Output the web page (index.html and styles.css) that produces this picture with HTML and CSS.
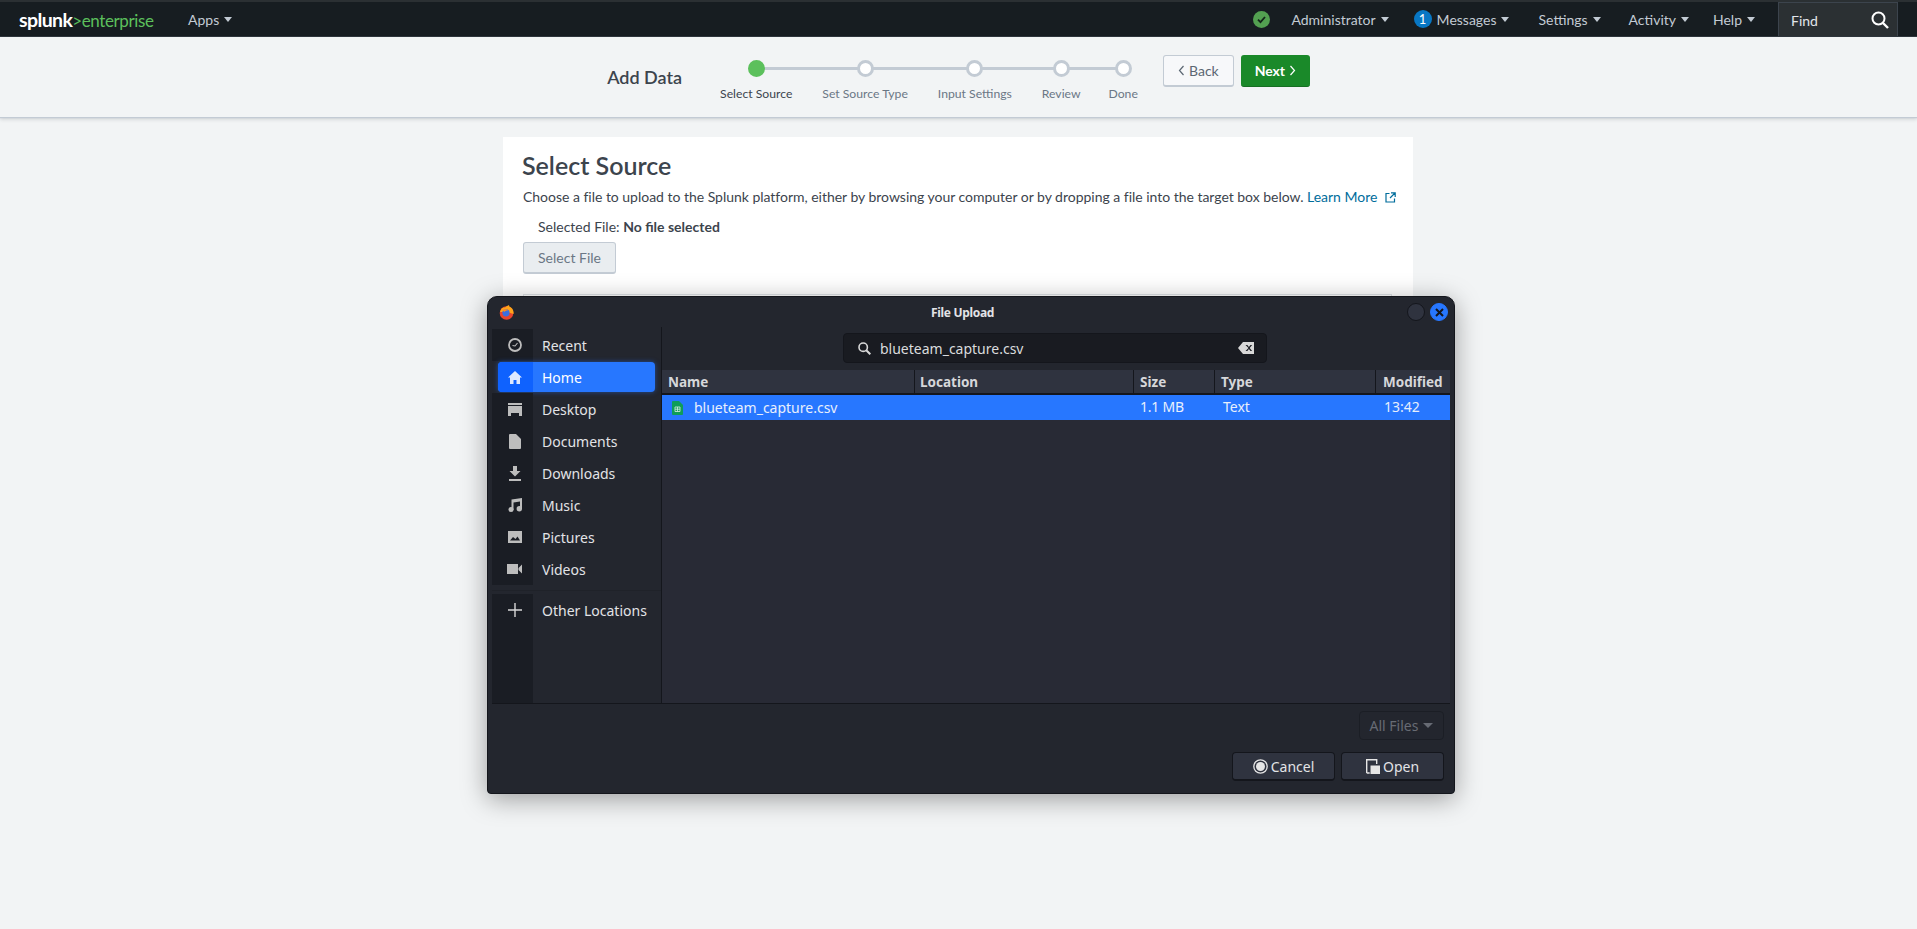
FILE: index.html
```html
<!DOCTYPE html>
<html lang="en">
<head>
  <meta charset="UTF-8" />
  <title>Add Data | Splunk</title>
  <link rel="stylesheet" href="styles.css">
</head>
<body>
  <nav class="navbar">
    <div class="logo"><span class="logo-splunk">splunk</span><span class="logo-green">&gt;enterprise</span></div>
    <a class="nav-item apps">Apps<i class="caret"></i></a>
    <div class="nav-right">
      <svg class="health" width="17" height="17" viewBox="0 0 17 17"><circle cx="8.5" cy="8.5" r="8.5" fill="#53a051"/><path d="M5 8.7l2.5 2.5L12 6" fill="none" stroke="#14261a" stroke-width="1.8"/></svg>
      <a class="nav-item admin">Administrator<i class="caret"></i></a>
      <a class="nav-item messages"><span class="badge">1</span>Messages<i class="caret"></i></a>
      <a class="nav-item settings">Settings<i class="caret"></i></a>
      <a class="nav-item activity">Activity<i class="caret"></i></a>
      <a class="nav-item help">Help<i class="caret"></i></a>
      <div class="find">
        <span>Find</span>
        <svg width="18" height="18" viewBox="0 0 18 18"><circle cx="7.5" cy="7.5" r="6" fill="none" stroke="#fff" stroke-width="2"/><path d="M12 12l5 5" stroke="#fff" stroke-width="2.4"/></svg>
      </div>
    </div>
  </nav>

  <header class="wizard">
    <h2 class="wizard-title">Add Data</h2>
    <ol class="steps">
      <li class="step active"><span class="dot"></span>Select Source</li>
      <li class="step"><span class="dot"></span>Set Source Type</li>
      <li class="step"><span class="dot"></span>Input Settings</li>
      <li class="step"><span class="dot"></span>Review</li>
      <li class="step"><span class="dot"></span>Done</li>
    </ol>
    <button class="btn btn-back"><svg width="7" height="11" viewBox="0 0 7 11"><path d="M5.5 1L1.5 5.5l4 4.5" fill="none" stroke="#5c6773" stroke-width="1.2"/></svg>Back</button>
    <button class="btn btn-next">Next<svg width="7" height="11" viewBox="0 0 7 11"><path d="M1.5 1l4 4.5-4 4.5" fill="none" stroke="#fff" stroke-width="1.2"/></svg></button>
  </header>

  <main class="panel">
    <h1>Select Source</h1>
    <p class="desc">Choose a file to upload to the Splunk platform, either by browsing your computer or by dropping a file into the target box below. <a class="learn">Learn More <svg width="11" height="11" viewBox="0 0 11 11"><path d="M4.5 1.5H1v8.500h8.500V6.500M6 .8h4.200V5M10 1L5 6" fill="none" stroke="#006d9c" stroke-width="1.200"/></svg></a></p>
    <p class="selected">Selected File: <b>No file selected</b></p>
    <button class="btn btn-select">Select File</button>
    <div class="dropzone"></div>
  </main>

  <div class="dialog">
    <div class="titlebar">
      <svg class="ff" width="15" height="15" viewBox="0 0 15 15">
        <circle cx="7.500" cy="8" r="6.800" fill="#e8452c"/>
        <path d="M1 7C2 3 4 2 6 2.500 7 1.500 9 .5 10 0c0 1.500 1 2 2 2.500 2 1.500 3 4 2.500 6.500L8 7z" fill="#ffa31a"/>
        <circle cx="7" cy="7.800" r="3.600" fill="#3a6fe0"/>
        <path d="M3 5c2-1 5-1 6 .5-2 0-3 .5-3.500 1.500z" fill="#ff8a1f"/>
      </svg>
      <span class="dialog-title">File Upload</span>
      <span class="win-btn"></span>
      <span class="win-btn close"><svg width="9" height="9" viewBox="0 0 9 9"><path d="M1 1l7 7M8 1L1 8" stroke="#14161c" stroke-width="2"/></svg></span>
    </div>

    <div class="dialog-main">
      <aside class="places">
        <div class="place"><span class="place-icon"><svg width="14" height="14" viewBox="0 0 14 14"><circle cx="7" cy="7" r="6" fill="none" stroke="#bdbdbd" stroke-width="1.800"/><path d="M4.500 7.500L7 8l2.500-3" fill="none" stroke="#bdbdbd" stroke-width="1.100"/></svg></span>Recent</div>
        <div class="place active"><span class="place-icon"><svg width="14" height="13" viewBox="0 0 14 13"><path d="M7 0L0 6.500h2V13h3.500V9h3v4H12V6.500h2z" fill="#dfe9ff"/></svg></span>Home</div>
        <div class="place"><span class="place-icon"><svg width="14" height="13" viewBox="0 0 14 13"><path d="M0 0h14v2H0zM0 3h14v10h-3v-3H3v3H0z" fill="#bdbdbd"/></svg></span>Desktop</div>
        <div class="place"><span class="place-icon"><svg width="12" height="15" viewBox="0 0 12 15"><path d="M0 1a1 1 0 0 1 1-1h6l5 5v9a1 1 0 0 1-1 1H1a1 1 0 0 1-1-1z" fill="#bdbdbd"/></svg></span>Documents</div>
        <div class="place"><span class="place-icon"><svg width="12" height="15" viewBox="0 0 12 15"><path d="M4 0h4v5h3.500L6 10.500.5 5H4zM0 13h12v2H0z" fill="#bdbdbd"/></svg></span>Downloads</div>
        <div class="place"><span class="place-icon"><svg width="14" height="14" viewBox="0 0 14 14"><path d="M3.500 1.500L14 0v11h-2V3.500L5.500 4.500V12h-2z" fill="#bdbdbd"/><circle cx="3" cy="11.500" r="2.500" fill="#bdbdbd"/><circle cx="11.300" cy="10.800" r="2.700" fill="#bdbdbd"/></svg></span>Music</div>
        <div class="place"><span class="place-icon"><svg width="14" height="12" viewBox="0 0 14 12"><path fill-rule="evenodd" d="M0 0h14v12H0zM2 9.500h10L9.500 5.500 7.500 8 5 6z" fill="#bdbdbd"/></svg></span>Pictures</div>
        <div class="place"><span class="place-icon"><svg width="15" height="10" viewBox="0 0 15 10"><path d="M0 0h11v10H0zM11.500 4L15 .5v9L11.500 6z" fill="#bdbdbd"/></svg></span>Videos</div>
        <div class="place other"><span class="place-icon"><svg width="14" height="14" viewBox="0 0 14 14"><path d="M6.300 0h1.400v6.300H14v1.400H7.700V14H6.300V7.700H0V6.300h6.300z" fill="#d8d8d8"/></svg></span>Other Locations</div>
        <div class="places-fill"><span class="strip"></span></div>
      </aside>

      <section class="files">
        <div class="search-wrap">
          <div class="search">
            <svg width="13" height="13" viewBox="0 0 13 13"><circle cx="5.200" cy="5.200" r="4.200" fill="none" stroke="#d8d8d8" stroke-width="1.600"/><path d="M8.300 8.300L12.300 12.300" stroke="#d8d8d8" stroke-width="2"/></svg>
            <span class="search-text">blueteam_capture.csv</span>
            <svg class="clear" width="16" height="12" viewBox="0 0 16 12"><path fill-rule="evenodd" d="M5 0h11v12H5L0 6zM7.500 3l3 3-3 3h1.800l1.600-1.900L12.500 9h1.600l-2.400-3 2.400-3h-1.600l-1.600 1.900L9.300 3z" fill="#d8d8d8"/></svg>
          </div>
        </div>
        <div class="file-head">
          <span>Name</span><span>Location</span><span>Size</span><span>Type</span><span>Modified</span>
        </div>
        <div class="file-row">
          <span class="file-name"><svg width="11" height="14" viewBox="0 0 11 14"><path d="M0 1a1 1 0 0 1 1-1h6l4 4v9a1 1 0 0 1-1 1H1a1 1 0 0 1-1-1z" fill="#0f9d58"/><path d="M3 6h5v4.500H3zM5.500 6v4.500M3 8.200h5" fill="none" stroke="#d5efe1" stroke-width=".8"/></svg>blueteam_capture.csv</span>
          <span></span>
          <span class="cell-size">1.1 MB</span>
          <span class="cell-type">Text</span>
          <span class="cell-mod">13:42</span>
        </div>
      </section>
    </div>

    <div class="dialog-foot">
      <div class="filter">All Files<i class="caret"></i></div>
      <div class="actions">
        <button class="gtk-btn"><svg width="15" height="15" viewBox="0 0 15 15"><circle cx="7.500" cy="7.500" r="6.700" fill="none" stroke="#e6e6e6" stroke-width="1.300"/><circle cx="7.500" cy="7.500" r="4.500" fill="#e6e6e6"/></svg>Cancel</button>
        <button class="gtk-btn"><svg width="14" height="15" viewBox="0 0 14 15"><path d="M.7 14V.7h10V5M.7 14h3" fill="none" stroke="#e6e6e6" stroke-width="1.400"/><path d="M4.500 6.500H14V15H4.500z" fill="#e6e6e6"/></svg>Open</button>
      </div>
    </div>
  </div>
</body>
</html>
```

FILE: styles.css
```css
* {
  box-sizing: border-box;
  margin: 0;
  padding: 0;
}

html, body {
  height: 100%;
  overflow: hidden;
}

body {
  position: relative;
  background: #f2f4f5;
  font-family: Lato, "Liberation Sans", sans-serif;
  font-size: 14px;
  color: #3c444d;
}

/* top nav */
.navbar {
  display: flex;
  align-items: center;
  height: 37px;
  padding-left: 19px;
  background: #171d21;
  border-top: 2px solid #2b3033;
  border-bottom: 1px solid #2f363d;
  color: #c3cbd4;
}

.logo {
  width: 169px;
  white-space: nowrap;
}

.logo-splunk {
  color: #fff;
  font-size: 19.5px;
  font-weight: 700;
  letter-spacing: -0.6px;
}

.logo-green {
  color: #5cc05c;
  font-size: 17px;
  letter-spacing: -0.4px;
}

.nav-item {
  display: flex;
  align-items: center;
  font-size: 14px;
  color: #c3cbd4;
}

.caret {
  display: inline-block;
  width: 0;
  height: 0;
  margin-left: 5px;
  border-left: 4px solid transparent;
  border-right: 4px solid transparent;
  border-top: 5px solid currentColor;
}

.nav-right {
  display: flex;
  align-items: center;
  margin-left: auto;
  padding-right: 19px;
  height: 100%;
}

.health { margin-right: 21px; }
.admin { margin-right: 25px; }
.messages { margin-right: 29px; }
.settings { margin-right: 28px; }
.activity { margin-right: 24px; }
.help { margin-right: 23px; }

.badge {
  width: 18px;
  height: 18px;
  margin-right: 5px;
  border-radius: 50%;
  background: #0877c4;
  color: #fff;
  font-size: 13px;
  line-height: 18px;
  text-align: center;
}

.find {
  display: flex;
  align-items: center;
  justify-content: space-between;
  width: 120px;
  height: 34px;
  margin-top: -1px;
  padding: 2px 8px 0 12px;
  background: #2b3033;
  border: 1px solid #3c444d;
  border-bottom: 0;
  color: #e1e6eb;
}

/* wizard header */
.wizard {
  display: flex;
  justify-content: center;
  height: 80px;
  padding-top: 18px;
  background: #f2f4f5;
  box-shadow: 0 1px 1px #c3cbd4, 0 2px 4px rgba(60, 68, 77, 0.22);
}

.wizard-title {
  margin: 10px 8px 0 0;
  font-size: 18px;
  font-weight: 600;
  line-height: 24px;
  color: #3c444d;
}

.steps {
  display: flex;
  margin: 5px 0 0 15px;
  list-style: none;
}

.step {
  position: relative;
  display: flex;
  flex-direction: column;
  align-items: center;
  padding: 0 15px;
  font-size: 12.2px;
  color: #6b7785;
  white-space: nowrap;
}

.step:nth-child(4) { padding-right: 14px; }
.step:nth-child(5) { padding-left: 14px; }

.step::before {
  content: "";
  position: absolute;
  top: 7px;
  right: 50%;
  height: 3px;
  background: #c3cbd4;
}

.step:first-child::before {
  display: none;
}

.step:nth-child(2)::before { width: 110px; }
.step:nth-child(3)::before { width: 109px; }
.step:nth-child(4)::before { width: 86px; }
.step:nth-child(5)::before { width: 62px; }

.dot {
  position: relative;
  z-index: 1;
  width: 17px;
  height: 17px;
  margin-bottom: 9px;
  border: 3px solid #c3cbd4;
  border-radius: 50%;
  background: #fff;
}

.step.active {
  color: #3c444d;
}

.step.active .dot {
  background: #5cc05c;
  border-color: #5cc05c;
}

.btn {
  display: inline-flex;
  align-items: center;
  justify-content: center;
  gap: 4px;
  height: 32px;
  border-radius: 3px;
  font-family: inherit;
  font-size: 14px;
}

.btn-back {
  width: 71px;
  margin-left: 10px;
  background: #f7f8fa;
  border: 1px solid #c3cbd4;
  border-bottom-width: 2px;
  color: #5c6773;
}

.btn-next {
  width: 69px;
  margin-left: 7px;
  background: #1a8929;
  border: 0;
  border-bottom: 1px solid #176f23;
  color: #fff;
  font-weight: 700;
}

/* main panel */
.panel {
  width: 910px;
  height: 360px;
  margin: 20px 0 0 503px;
  padding: 15px 20px 0;
  background: #fff;
}

.panel h1 {
  margin-left: -1px;
  font-size: 25px;
  font-weight: 600;
  line-height: 27px;
  color: #3c444d;
}

.desc {
  margin-top: 8px;
  font-size: 14px;
  line-height: 20px;
  letter-spacing: -0.02px;
  white-space: nowrap;
}

.learn {
  color: #006d9c;
}

.learn svg {
  margin-left: 4px;
  vertical-align: -1px;
}

.selected {
  margin-top: 10px;
  padding-left: 15px;
  line-height: 20px;
}

.btn-select {
  display: flex;
  width: 93px;
  margin-top: 5px;
  background: #e9edf0;
  border: 1px solid #c3cbd4;
  border-bottom-width: 2px;
  color: #6b7785;
}

.dropzone {
  height: 60px;
  margin: 20px 1px 0 0;
  border: 1px solid #dfe3e7;
}

/* gtk file dialog, lies over the page */
.dialog {
  position: absolute;
  left: 487px;
  top: 296px;
  width: 968px;
  height: 498px;
  padding: 0 4px;
  background: #23262e;
  border: 1px solid #14161c;
  border-radius: 10px 10px 4px 4px;
  box-shadow: 0 5px 26px rgba(0, 0, 0, 0.36);
  font-family: "Noto Sans", sans-serif;
  font-size: 14px;
  color: #e2e3e6;
}

.titlebar {
  display: flex;
  align-items: center;
  height: 30px;
  padding: 0 2px 0 7px;
  font-size: 12px;
  font-weight: 700;
}

.dialog-title {
  flex: 1;
  padding-left: 9px;
  text-align: center;
  letter-spacing: -0.3px;
}

.win-btn {
  display: flex;
  align-items: center;
  justify-content: center;
  width: 18px;
  height: 18px;
  margin-left: 5px;
  border-radius: 50%;
  background: #2f333f;
  border: 1px solid #14161c;
}

.win-btn.close {
  background: #2777ff;
  border-color: #2777ff;
}

.dialog-main {
  display: flex;
  height: 377px;
  border-bottom: 1px solid #14161c;
}

.places {
  position: relative;
  display: flex;
  flex-direction: column;
  width: 170px;
  padding-top: 3px;
  background: #23262e;
  border-right: 1px solid #14161c;
}

.place {
  position: relative;
  display: flex;
  align-items: center;
  height: 30px;
  margin: 0 6px 2px;
  border-radius: 4px;
}

.place::before {
  content: "";
  position: absolute;
  left: -6px;
  top: -1px;
  bottom: -1px;
  width: 41px;
  background: #1a1d24;
}

.place-icon {
  position: relative;
  display: flex;
  align-items: center;
  justify-content: center;
  width: 33px;
  margin-right: 11px;
}

.place.active {
  background: #2777ff;
  box-shadow: 0 0 5px rgba(39, 119, 255, 0.5);
  color: #fff;
}

.place.active::before {
  left: 0;
  top: 0;
  bottom: 0;
  width: 35px;
  border-radius: 4px 0 0 4px;
  background: #0f62fe;
}

.place.other {
  margin-top: 9px;
}

.place.other::after {
  content: "";
  position: absolute;
  left: -6px;
  right: -6px;
  top: -5px;
  height: 1px;
  background: #1f2229;
}

.places-fill {
  flex: 1;
  margin-top: -2px;
}

.strip {
  display: block;
  width: 41px;
  height: 100%;
  background: #1a1d24;
}

.files {
  flex: 1;
  display: flex;
  flex-direction: column;
  background: #282a35;
}

.search-wrap {
  display: flex;
  justify-content: center;
  height: 43px;
  padding: 6px 2px 0 0;
  background: #23262e;
}

.search {
  display: flex;
  align-items: center;
  gap: 9px;
  width: 424px;
  height: 30px;
  padding: 0 12px 0 14px;
  background: #191b21;
  border: 1px solid #14161c;
  border-radius: 4px;
  color: #dadbdd;
}

.search-text {
  flex: 1;
}

.file-head,
.file-row {
  display: grid;
  grid-template-columns: 253px 219px 81px 161px 74px;
}

.file-head {
  height: 25px;
  background: #2f333f;
  border-bottom: 2px solid #14161c;
  font-weight: 700;
  font-size: 13.5px;
  line-height: 24px;
  color: #d6d7da;
}

.file-head span {
  padding-left: 6px;
  border-right: 1px solid #14161c;
  white-space: nowrap;
  overflow: hidden;
}

.file-head span:nth-child(2) { padding-left: 5px; }
.file-head span:last-child {
  padding-left: 7px;
  border-right: 0;
}

.file-row {
  height: 25px;
  background: #2777ff;
  line-height: 24px;
  color: #e8effc;
}

.file-name {
  display: flex;
  align-items: center;
  gap: 11px;
  padding-left: 10px;
}

.cell-size {
  padding-left: 6px;
  letter-spacing: -0.2px;
}
.cell-type { padding-left: 8px; }
.cell-mod { padding-left: 8px; }

.dialog-foot {
  display: flex;
  flex-direction: column;
  align-items: flex-end;
  padding: 7px 6px 0 0;
}

.filter {
  display: flex;
  align-items: center;
  justify-content: center;
  width: 85px;
  height: 29px;
  padding-bottom: 1px;
  border: 1px solid #1b1e25;
  border-radius: 4px;
  color: #676b74;
}

.filter .caret {
  border-left-width: 5px;
  border-right-width: 5px;
  border-top-width: 5px;
}

.actions {
  display: flex;
  gap: 6px;
  margin-top: 12px;
}

.gtk-btn {
  display: flex;
  align-items: center;
  justify-content: center;
  gap: 3px;
  width: 103px;
  height: 29px;
  background: #2f333f;
  border: 1px solid #14161c;
  border-bottom-width: 2px;
  border-radius: 4px;
  font-family: inherit;
  font-size: 14px;
  color: #e2e3e6;
}
```
